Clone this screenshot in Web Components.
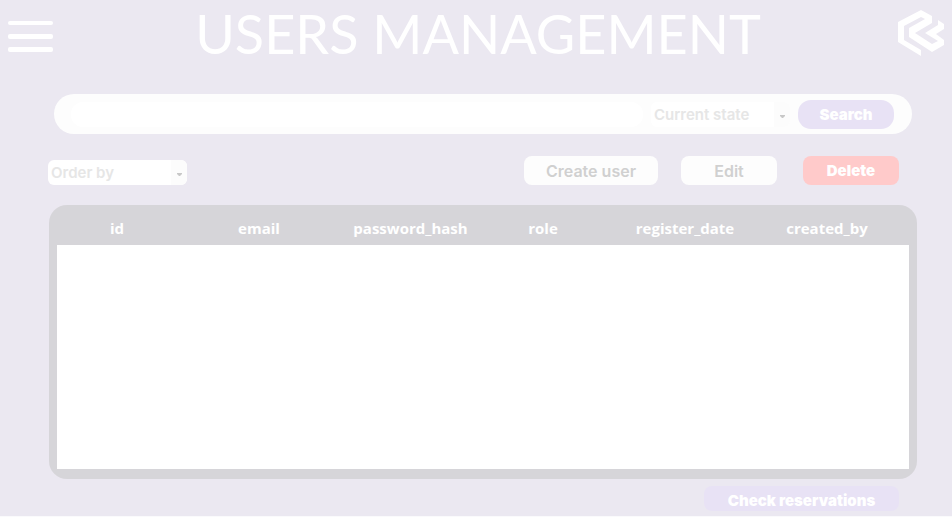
<!DOCTYPE html>
<html lang="en">
<head>
<meta charset="utf-8">
<title>Users management</title>
<style>
html{background:#fafafc}
body{margin:0;font-family:Inter,"Liberation Sans",sans-serif;font-size:15px}
</style>
</head>
<body>
<um-app></um-app>
<script>
const define = (name, html, setup) => {
  const template = document.createElement('template');
  template.innerHTML = html;
  customElements.define(name, class extends HTMLElement {
    constructor() {
      super();
      this.attachShadow({mode: 'open'}).append(template.content.cloneNode(true));
    }
    connectedCallback() { if (setup) setup(this, this.shadowRoot); }
  });
};

define('um-button', `
<style>
:host{display:block;width:96px;height:29px;--bg:#fdfdfd;--ink:#d0d0d0;--weight:600;--size:16px}
:host([kind=primary]){--bg:#e8e2f5;--ink:#fff;--weight:900;--size:15px}
:host([kind=danger]){--bg:#ffcaca;--ink:#fff;--weight:900;--size:15px}
button{box-sizing:border-box;width:100%;height:100%;padding:var(--drop,1px) 0 0;border:0;border-radius:var(--radius,8px);
background:var(--bg);color:var(--ink);font:var(--weight) var(--size)/20px Inter,sans-serif;white-space:nowrap;cursor:pointer}
</style>
<button type="button"><slot></slot></button>`);

define('um-select', `
<style>
:host{display:grid;grid-template-columns:1fr 16px;width:139px;height:25px;border-radius:6px;background:#fff;overflow:hidden}
select{grid-area:1/1/2/3;appearance:none;width:100%;height:100%;border:0;margin:0;padding:0 0 0 3px;background:none;
color:#e6e6e6;font:600 15px/25px Inter,sans-serif;cursor:pointer}
span{grid-area:1/2;display:flex;align-items:center;justify-content:center;padding-top:4px;background:#fcfcfc;pointer-events:none}
</style>
<select><option></option></select>
<span><svg width="5" height="3" viewBox="0 0 5 3"><path d="M0 0H5V1L3 3H2L0 1Z" fill="#c8c8c8"/></svg></span>`,
(host, root) => {
  root.querySelector('option').textContent = host.getAttribute('label');
  root.querySelector('select').setAttribute('aria-label', host.getAttribute('label'));
});

define('um-header', `
<style>
:host{display:grid;grid-template-columns:46px 1fr 46px;align-items:center;height:72px;padding:0 8px}
button{display:flex;width:45px;height:32px;padding:0;border:0;background:none;cursor:pointer}
h1{margin:0;padding:0 0 4px 4px;text-align:center;color:#fff;font:400 54px/68px Lato,sans-serif;white-space:nowrap}
a{display:flex;padding-bottom:6px}
</style>
<button type="button" aria-label="Menu"><svg width="45" height="32" viewBox="0 0 45 32" fill="#fff"><rect y="1" width="45" height="4" rx="2"/><rect y="14" width="45" height="5" rx="2"/><rect y="27" width="45" height="5" rx="2"/></svg></button>
<h1><slot></slot></h1>
<a href="#" aria-label="Home"><svg width="46" height="46" viewBox="0 0 46 46" fill="#fff"><path d="M0 12L23 0L34 6V13L17 23L34 34L40 31L27 23L40 15V10L46 14V19L38 24L46 30V35L34 42L11 27V18L27 9L23 7L6 16V30L23 40V46L0 32Z"/></svg></a>`);

define('um-search', `
<style>
form{display:flex;align-items:center;height:40px;margin:0;padding:0 18px 0 17px;border-radius:20px;background:#fdfdfd;box-sizing:border-box}
input{flex:1;min-width:0;height:25px;box-sizing:border-box;border:0;border-radius:12px;padding:0 12px;background:#fff;font:inherit;outline:0}
um-select{margin:0 8px}
um-button{--radius:13px}
</style>
<form><input type="search" aria-label="Search users"><um-select label="Current state"></um-select><um-button kind="primary">Search</um-button></form>`);

define('um-toolbar', `
<style>
:host{display:flex;align-items:flex-end;justify-content:space-between}
div{display:flex;gap:23px}
.wide{width:134px}
.last{margin-left:3px}
</style>
<um-select label="Order by"></um-select>
<div><um-button class="wide">Create user</um-button><um-button>Edit</um-button><um-button class="last" kind="danger">Delete</um-button></div>`);

define('um-table', `
<style>
:host{display:block;padding:0 8px 10px;border-radius:18px;background:#d6d5d9}
table{width:100%;table-layout:fixed;border-collapse:collapse}
th{height:40px;box-sizing:border-box;padding:5px 22px 0 0;color:#fff;font:700 15px/20px "Open Sans",sans-serif;text-align:center;white-space:nowrap}
th.long{padding-right:3px}
td{height:224px;padding:0;background:#fff}
</style>
<table><thead><tr></tr></thead><tbody><tr><td></td></tr></tbody></table>`,
(host, root) => {
  const columns = host.getAttribute('columns').split(' ');
  root.querySelector('thead tr').replaceChildren(...columns.map(name => {
    const th = document.createElement('th');
    th.scope = 'col';
    th.textContent = name;
    if (name === 'password_hash') th.className = 'long';
    return th;
  }));
  root.querySelector('td').colSpan = columns.length;
});

define('um-app', `
<style>
:host{display:block;background:#ebe8f1;padding-bottom:5px}
main{padding:22px 35px 0 48px}
um-search{display:block;margin:0 5px 0 6px}
um-toolbar{margin:22px 18px 20px 0}
um-table{margin-left:1px}
footer{display:flex;justify-content:flex-end;padding:7px 18px 0 0}
footer um-button{width:195px;height:25px;--drop:4px}
</style>
<um-header>USERS MANAGEMENT</um-header>
<main>
<um-search></um-search>
<um-toolbar></um-toolbar>
<um-table columns="id email password_hash role register_date created_by"></um-table>
<footer><um-button kind="primary">Check reservations</um-button></footer>
</main>`);
</script>
</body>
</html>
